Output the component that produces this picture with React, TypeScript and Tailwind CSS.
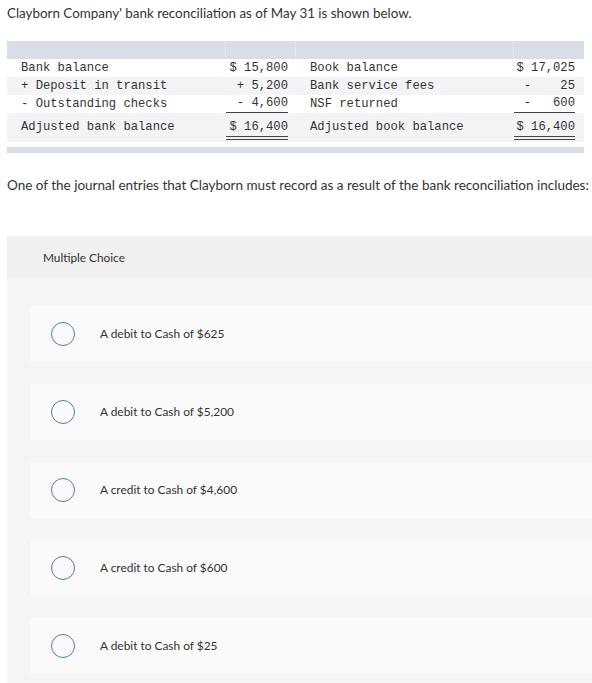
const bankRows = [
  { label: "Bank balance", amount: "$ 15,800", book: "Book balance", bookAmt: "$ 17,025" },
  { label: "+ Deposit in transit", amount: "+ 5,200", book: "Bank service fees", bookAmt: "-    25" },
  { label: "- Outstanding checks", amount: "- 4,600", book: "NSF returned", bookAmt: "-   600" },
];

const choices = [
  "A debit to Cash of $625",
  "A debit to Cash of $5,200",
  "A credit to Cash of $4,600",
  "A credit to Cash of $600",
  "A debit to Cash of $25",
];

const cols = "grid grid-cols-[219px_70px_218px_70px]";

export default function App() {
  return (
    <div className="min-h-[683px] bg-white text-[#333] font-['Lato','Liberation_Sans',sans-serif]">
      <p className="pl-[7px] pt-[4px] text-[13.4px] leading-[18px]">
        Clayborn Company' bank reconciliation as of May 31 is shown below.
      </p>

      {/* reconciliation table */}
      <div className="ml-[7px] mt-[19px] w-[577px] font-['Liberation_Mono',monospace] text-[12.2px]">
        <div className={`${cols} h-[18px] bg-[#d9dde6]`}>
          <div className="border-r border-[#e6e9ef]" />
          <div className="border-r border-[#e6e9ef]" />
          <div className="border-r border-[#e6e9ef]" />
          <div />
        </div>

        {bankRows.map((r, i) => (
          <div
            key={r.label}
            className={`${cols} h-[18px] leading-[18px] whitespace-pre ${i === 1 ? "bg-[#f4f4f6]" : "bg-white"}`}
          >
            <div className="pl-[14px]">{r.label}</div>
            <div className="pr-[8px]">
              <div className={`text-right ${i === 2 ? "border-b border-[#444] leading-[17px]" : ""}`}>{r.amount}</div>
            </div>
            <div className="pl-[14px]">{r.book}</div>
            <div className="pr-[9px]">
              <div className={`text-right ${i === 2 ? "border-b border-[#444] leading-[17px]" : ""}`}>{r.bookAmt}</div>
            </div>
          </div>
        ))}

        <div className={`${cols} h-[29px] bg-[#f4f4f6] pt-[6px]`}>
          <div className="pl-[14px] leading-[17px]">Adjusted bank balance</div>
          <div className="pr-[8px]">
            <div className="text-right leading-[17px] border-b-4 border-double border-[#444]">$ 16,400</div>
          </div>
          <div className="pl-[14px] leading-[17px]">Adjusted book balance</div>
          <div className="pr-[9px]">
            <div className="text-right leading-[17px] border-b-4 border-double border-[#444]">$ 16,400</div>
          </div>
        </div>

        <div className="h-[5px] bg-white" />
        <div className="h-[6px] bg-[#d9dde6]" />
      </div>

      <p className="pl-[7px] mt-[23px] text-[13.5px] leading-[18px] whitespace-nowrap">
        One of the journal entries that Clayborn must record as a result of the bank reconciliation includes:
      </p>

      {/* multiple choice */}
      <div className="ml-[7px] mt-[42px]">
        <div className="h-[43px] bg-[#f0f0f0] pl-[36px] flex items-center text-[11.8px]">Multiple Choice</div>
        <div className="bg-[#f5f5f5] pl-[23px] pt-[27px] pb-[11px] flex flex-col gap-[22px]">
          {choices.map((c) => (
            <div key={c} className="h-[56px] bg-[#fafafa] flex items-center pl-[21px]">
              <span className="w-[24px] h-[24px] rounded-full border-[1.5px] border-[#4f7aa9] shrink-0" />
              <span className="ml-[25px] text-[11.9px]">{c}</span>
            </div>
          ))}
        </div>
      </div>
    </div>
  );
}
